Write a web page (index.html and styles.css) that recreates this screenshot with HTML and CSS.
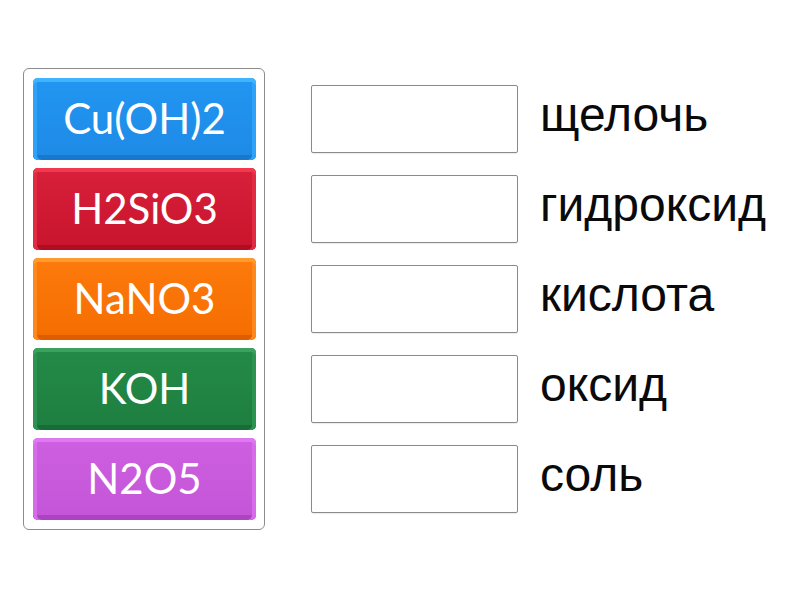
FILE: index.html
```html
<!DOCTYPE html>
<html>
<head>
<meta charset="utf-8">
<link rel="stylesheet" href="styles.css">
</head>
<body>
<div class="page">
  <div class="bank">
    <div class="tile blue">Cu(OH)2</div>
    <div class="tile red">H2SiO3</div>
    <div class="tile orange">NaNO3</div>
    <div class="tile green">KOH</div>
    <div class="tile purple">N2O5</div>
  </div>
  <div class="targets">
    <div class="row"><div class="slot"></div><div class="label">щелочь</div></div>
    <div class="row"><div class="slot"></div><div class="label">гидроксид</div></div>
    <div class="row"><div class="slot"></div><div class="label">кислота</div></div>
    <div class="row"><div class="slot"></div><div class="label">оксид</div></div>
    <div class="row"><div class="slot"></div><div class="label">соль</div></div>
  </div>
</div>
</body>
</html>
```
FILE: styles.css
```css
html, body {
  margin: 0;
  padding: 0;
  background: #ffffff;
}
.page {
  width: 800px;
  height: 600px;
  display: flex;
  align-items: flex-start;
  padding: 68px 0 0 23px;
  box-sizing: border-box;
}
.bank {
  width: 242px;
  box-sizing: border-box;
  border: 1px solid #8c8c8c;
  border-radius: 6px;
  padding: 9px 8px 9px 9px;
  display: flex;
  flex-direction: column;
  gap: 8px;
}
.tile {
  height: 82px;
  border-radius: 5px;
  display: flex;
  align-items: center;
  justify-content: center;
  color: #ffffff;
  font-family: "Lato", "Open Sans", sans-serif;
  font-size: 42px;
  letter-spacing: 0;
  box-sizing: border-box;
  padding-bottom: 3px;
}
.blue {
  background: linear-gradient(#2196f1, #1e8ae6);
  box-shadow: inset 0 4px 0 #40b4ff, inset 4px 0 0 #2ea2f8, inset -4px 0 0 #2ea2f8, inset 0 -5px 0 #1778cc;
}
.red {
  background: linear-gradient(#d8203a, #c8142c);
  box-shadow: inset 0 4px 0 #f2384f, inset 4px 0 0 #e02b43, inset -4px 0 0 #e02b43, inset 0 -5px 0 #b00c22;
}
.orange {
  background: linear-gradient(#fd7a0c, #f56d00);
  box-shadow: inset 0 4px 0 #ff9a2e, inset 4px 0 0 #ff881c, inset -4px 0 0 #ff881c, inset 0 -5px 0 #dc5e00;
}
.green {
  background: linear-gradient(#248a47, #1e7f40);
  box-shadow: inset 0 4px 0 #3aa25e, inset 4px 0 0 #2c9450, inset -4px 0 0 #2c9450, inset 0 -5px 0 #186d36;
}
.purple {
  background: linear-gradient(#cd5fe0, #c455d8);
  box-shadow: inset 0 4px 0 #df79f2, inset 4px 0 0 #d66ce9, inset -4px 0 0 #d66ce9, inset 0 -5px 0 #ac44c2;
}
.targets {
  margin-left: 46px;
  margin-top: 17px;
  display: flex;
  flex-direction: column;
  gap: 22px;
}
.row {
  display: flex;
  align-items: flex-start;
  gap: 22px;
  height: 68px;
}
.slot {
  width: 207px;
  height: 68px;
  box-sizing: border-box;
  border: 1px solid #8a8a8a;
  border-radius: 2px;
  background: #ffffff;
  box-shadow: 0 1px 1px rgba(0,0,0,0.08);
}
.label {
  font-family: "Liberation Sans", Arial, sans-serif;
  font-size: 48px;
  line-height: 60px;
  color: #0a0a0a;
  white-space: nowrap;
}
```
